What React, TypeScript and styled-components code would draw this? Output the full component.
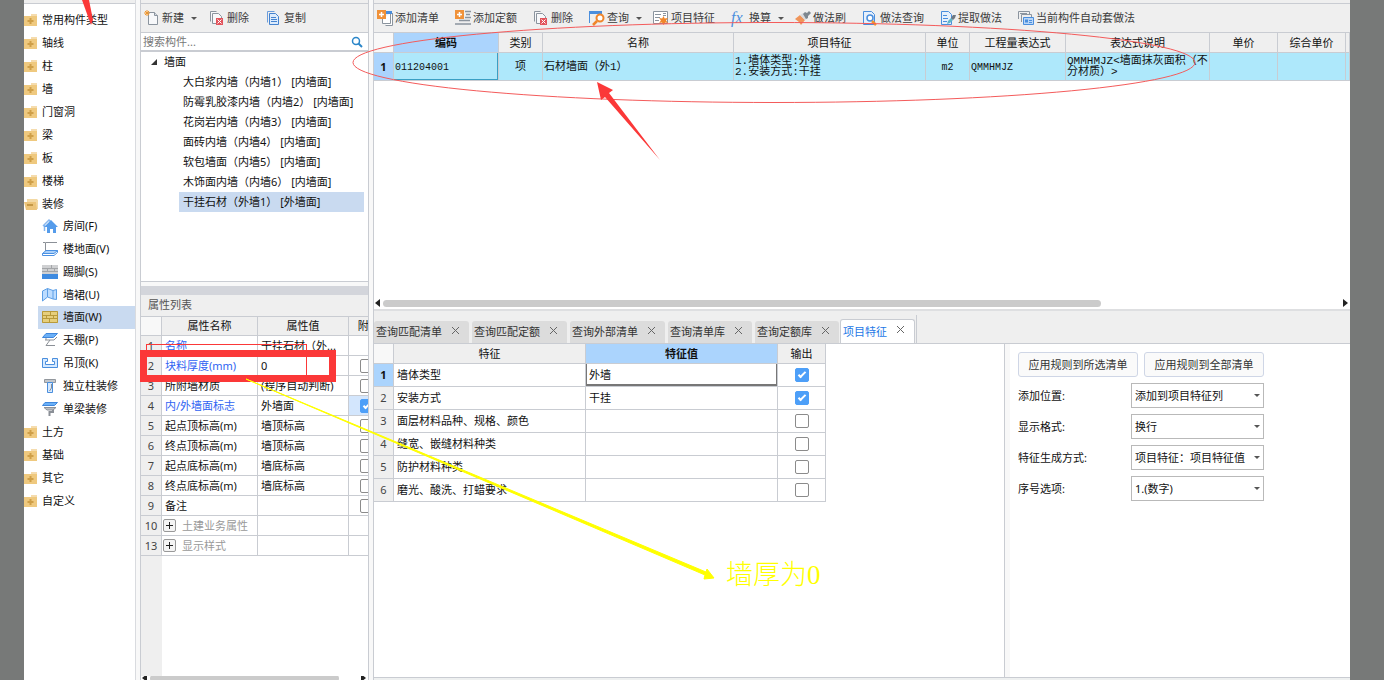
import React from 'react';
import styled, { createGlobalStyle, css } from 'styled-components';

const GlobalStyle = createGlobalStyle`
  *, *::before, *::after { box-sizing: border-box; }
  body { margin: 0; background: #777978; }
  body, button, input, select, table {
    font-family: "Noto Sans", "Noto Sans CJK SC", sans-serif;
    font-size: 11px;
    line-height: 16px;
    color: #111;
  }
  button { border: 0; padding: 0; background: none; cursor: pointer; }
`;

const line = '#c9ccd2';
const bar = '#efefef';
const pick = '#c9daf0';
const headBlue = '#abd4fd';

/* ---------- frame ---------- */

const Desk = styled.div`
  position: relative;
  min-height: 100vh;
  padding: 0 34px 0 24px;
  display: flex;
  background: #777978;
  overflow: hidden;
`;

const Shell = styled.div`
  flex: 1;
  min-width: 0;
  display: flex;
  background: #f8f8f8;
`;

const Strip = styled.div`
  flex: none;
  height: 4px;
  background: ${bar};
  border-bottom: 1px solid ${line};
`;

/* ---------- category list ---------- */

const Side = styled.nav`
  flex: none;
  width: 112px;
  background: #fff;
  border-right: 1px solid #d9dbdf;
`;

const CatList = styled.ul`
  margin: 0;
  padding: 4px 0 0;
  list-style: none;
`;

const SubList = styled.ul`
  margin: 0;
  padding: 0 0 0 14px;
  list-style: none;
  display: grid;
  height: 205px;
`;

const CatButton = styled.button`
  display: flex;
  align-items: center;
  gap: 4px;
  width: 100%;
  height: 23px;
  text-align: left;
  white-space: nowrap;
`;

const SubButton = styled.button<{ $active?: boolean }>`
  display: flex;
  align-items: center;
  gap: 5px;
  width: 100%;
  height: 100%;
  padding-left: 4px;
  text-align: left;
  white-space: nowrap;
  background: ${(p) => (p.$active ? pick : 'transparent')};
`;

/* ---------- component column ---------- */

const Mid = styled.section`
  flex: none;
  width: 229px;
  margin-left: 4px;
  display: flex;
  flex-direction: column;
  border: solid ${line};
  border-width: 0 1px;
`;

const Tools = styled.div<{ $gap: number }>`
  flex: none;
  height: 29px;
  padding: 0 3px;
  display: flex;
  align-items: center;
  gap: ${(p) => p.$gap}px;
  background: ${bar};
  border-bottom: 1px solid ${line};
`;

const ToolButton = styled.button<{ $menu?: boolean }>`
  display: flex;
  align-items: center;
  gap: 2px;
  white-space: nowrap;
  color: #3c3c3c;
  ${(p) =>
    p.$menu &&
    css`
      margin-right: -5px;
    `}
`;

const Caret = styled.span`
  margin-left: 5px;
  border: 3px solid transparent;
  border-top-color: #555;
  border-bottom-width: 0;
`;

const SearchBar = styled.label`
  flex: none;
  height: 19px;
  padding: 0 5px 0 2px;
  display: flex;
  align-items: center;
  background: #fff;
  border-bottom: 2px solid ${line};
`;

const SearchInput = styled.input`
  flex: 1;
  min-width: 0;
  padding: 0;
  border: 0;
  outline: 0;
  background: none;
  &::placeholder { color: #777; opacity: 1; }
`;

const TreePane = styled.div`
  flex: none;
  height: 230px;
  background: #fff;
  border-bottom: 1px solid ${line};
`;

const TreeRoot = styled.div`
  display: flex;
  align-items: center;
  gap: 6px;
  height: 20px;
  padding-left: 9px;
`;

const TreeItem = styled.button<{ $active?: boolean }>`
  display: block;
  width: 185px;
  height: 20px;
  margin-left: 38px;
  padding: 0 0 0 4px;
  text-align: left;
  white-space: pre;
  background: ${(p) => (p.$active ? pick : 'transparent')};
`;

const Splitter = styled.div`
  flex: none;
  height: 9px;
  margin-top: 4px;
  background: #d3d5db;
`;

const PaneTitle = styled.h2`
  flex: none;
  margin: 0;
  height: 22px;
  padding-left: 7px;
  line-height: 20px;
  font-size: 11px;
  font-weight: 400;
  color: #555;
  background: ${bar};
  border-bottom: 1px solid ${line};
`;

const PropPane = styled.div`
  flex: 1;
  overflow: hidden;
  background: linear-gradient(to right, ${bar} 21px, #fff 21px);
`;

/* ---------- tables ---------- */

const Col = styled.col<{ $w?: number }>`
  width: ${(p) => (p.$w ? `${p.$w}px` : 'auto')};
`;

const Grid = styled.table<{ $w: string; $head: number; $row: number }>`
  width: ${(p) => p.$w};
  border-collapse: separate;
  border-spacing: 0;
  table-layout: fixed;
  background: #fff;
  th, td {
    padding: 0 3px;
    white-space: nowrap;
    border: solid ${line};
    border-width: 0 1px 1px 0;
  }
  thead th { height: ${(p) => p.$head}px; }
  tbody th, tbody td { height: ${(p) => p.$row}px; }
`;

const Head = styled.th<{ $on?: boolean; $blank?: boolean; $left?: boolean }>`
  font-weight: ${(p) => (p.$on ? 700 : 400)};
  text-align: ${(p) => (p.$left ? 'left' : 'center')};
  background: ${(p) => (p.$on ? headBlue : p.$blank ? '#f8f8f8' : bar)};
`;

const Num = styled.th<{ $on?: boolean }>`
  && { padding: 0; }
  text-align: center;
  font-weight: ${(p) => (p.$on ? 700 : 400)};
  color: ${(p) => (p.$on ? '#111' : '#444')};
  background: ${(p) => (p.$on ? headBlue : bar)};
`;

const Cell = styled.td<{ $tone?: 'link' | 'mute'; $focus?: boolean; $mid?: boolean; $tint?: boolean }>`
  text-align: ${(p) => (p.$mid ? 'center' : 'left')};
  color: ${(p) => (p.$tone === 'link' ? '#2f63f2' : p.$tone === 'mute' ? '#999' : '#111')};
  background: ${(p) => (p.$tint ? '#d3e6fd' : 'transparent')};
  ${(p) => p.$focus && css`box-shadow: inset 1px 0 #777, inset -1px -2px #777;`}
`;

const BillCell = styled.td<{ $mid?: boolean; $focus?: boolean; $code?: boolean }>`
  font-family: "Liberation Mono", "Noto Sans CJK SC", monospace;
  font-size: ${(p) => (p.$code ? 10 : 11)}px;
  line-height: 11px;
  text-align: ${(p) => (p.$mid ? 'center' : 'left')};
  background: #aee8fb;
  && { padding: 1px 1px 0; white-space: pre-line; }
  ${(p) => p.$focus && css`box-shadow: inset -1px -1px #3a9fc4;`}
`;

const Check = styled.input<{ $inset?: boolean }>`
  appearance: none;
  display: block;
  width: 14px;
  height: 14px;
  margin: ${(p) => (p.$inset ? '0 0 0 8px' : '0 auto')};
  border: 1px solid #8b8b8b;
  border-radius: 2px;
  background: #fff;
  &:checked {
    border-color: #4d9ff8;
    background: #4d9ff8;
  }
  &:checked::after {
    content: "";
    display: block;
    width: 8px;
    height: 4px;
    margin: 3px 0 0 2px;
    border: solid #fff;
    border-width: 0 0 2px 2px;
    transform: rotate(-45deg);
  }
`;

const Expand = styled.span`
  display: flex;
  align-items: center;
  gap: 6px;
  margin-left: -2px;
`;

const PlusButton = styled.button`
  display: grid;
  place-items: center;
  width: 13px;
  height: 13px;
  background: #f4f4f4;
  border: 1px solid #999;
  border-radius: 2px;
`;

const Scroll = styled.div<{ $h: number; $pad: number }>`
  flex: none;
  height: ${(p) => p.$h}px;
  display: flex;
  align-items: center;
  gap: ${(p) => p.$pad}px;
  padding: 0 2px 0 1px;
  background: #fff;
  overflow: hidden;
`;

const Track = styled.div`
  flex: 1;
`;

const Thumb = styled.div<{ $w: string }>`
  width: ${(p) => p.$w};
  height: 7px;
  border-radius: 4px;
  background: #cbcbcb;
`;

const Nub = styled.span<{ $right?: boolean }>`
  border: 4px solid transparent;
  ${(p) =>
    p.$right
      ? css`border-right-width: 0; border-left: 5px solid #222;`
      : css`border-left-width: 0; border-right: 5px solid #222;`}
`;

/* ---------- work area ---------- */

const Main = styled.main`
  flex: 1;
  min-width: 0;
  margin-left: 4px;
  display: flex;
  flex-direction: column;
  border-left: 1px solid ${line};
`;

const BillPane = styled.div`
  flex: none;
  height: 264px;
  background: #fff;
`;

const TabBar = styled.div`
  flex: none;
  height: 35px;
  display: flex;
  align-items: flex-end;
  gap: 3px;
  background: ${bar};
  border-top: 2px solid #dedfe1;
  border-bottom: 1px solid ${line};
`;

const Tab = styled.div<{ $active?: boolean }>`
  display: flex;
  align-items: center;
  gap: 9px;
  height: 22px;
  padding: 0 8px 0 2px;
  white-space: nowrap;
  background: #dcdcdc;
  border-radius: 3px 3px 0 0;
  ${(p) =>
    p.$active &&
    css`
      height: 24px;
      margin-left: -2px;
      background: #fff;
      border: 1px solid ${line};
      border-bottom: 0;
    `}
`;

const TabButton = styled.button<{ $active?: boolean }>`
  color: ${(p) => (p.$active ? '#1e78e6' : '#333')};
`;

const CloseButton = styled.button`
  display: flex;
  padding-bottom: 4px;
`;

const TabEnd = styled.span`
  width: 1px;
  height: 28px;
  margin-left: -2px;
  background: ${line};
`;

const Lower = styled.div`
  flex: 1;
  min-height: 0;
  display: flex;
  border-bottom: 1px solid ${line};
`;

const FeaturePane = styled.div`
  flex: 1;
  background: #fff;
  border-right: 1px solid ${line};
`;

const RulePane = styled.form`
  flex: 0 1 340px;
  margin-left: 5px;
  padding: 8px;
  display: flex;
  flex-direction: column;
  gap: 6px;
  background: #fff;
`;

const RuleRow = styled.div`
  display: flex;
  align-items: center;
  gap: 6px;
`;

const RuleButton = styled.button`
  width: 120px;
  height: 25px;
  color: #333;
  background: #fafafa;
  border: 1px solid #cfd6e6;
  border-radius: 3px;
`;

const RuleLabel = styled.label`
  width: 107px;
`;

const SelectBox = styled.div`
  position: relative;
  width: 133px;
  height: 25px;
`;

const Select = styled.select`
  appearance: none;
  width: 100%;
  height: 100%;
  padding: 0 12px 0 3px;
  background: #fff;
  border: 1px solid #b9b9b9;
  border-radius: 0;
`;

const SelectCaret = styled(Caret)`
  position: absolute;
  right: 4px;
  top: 11px;
  pointer-events: none;
`;

const Foot = styled.div`
  flex: none;
  height: 2px;
  background: #eef0f0;
`;

/* ---------- markup drawn over the window ---------- */

const Markup = styled.svg`
  position: absolute;
  left: 0;
  top: 0;
  width: 100%;
  height: 100%;
  pointer-events: none;
`;

const Note = styled.p`
  position: absolute;
  left: 726px;
  top: 558px;
  margin: 0;
  font-family: "Liberation Serif", "Noto Sans CJK SC", serif;
  font-size: 27px;
  font-weight: 300;
  line-height: 34px;
  color: #ffff00;
  pointer-events: none;
`;

/* ---------- icons ---------- */

const Folder = ({ open }: { open?: boolean }) => (
  <svg width="14" height="14" viewBox="0 0 14 14">
    {open ? (
      <>
        <path d="M3 2h10l1 1v9H3z" fill="#f3d9a4" />
        <path d="M0 5h12l1 8H2z" fill="#ecc479" />
        <path d="M3 8h6" stroke="#b98a35" strokeWidth="1.500" />
      </>
    ) : (
      <>
        <path d="M7 1h6v2H7z" fill="#f5dcae" />
        <path d="M0 3h13v10H0z" fill="#efc97f" />
        <path d="M6.500 5v6M3.500 8h6" stroke="#cf9f48" strokeWidth="2" />
      </>
    )}
  </svg>
);

const subArt: Record<string, React.ReactNode> = {
  room: (
    <>
      <path d="M1 8l6-6 2 2M2.500 7v6" stroke="#86b6ee" fill="none" strokeWidth="1.500" />
      <path d="M2 9l7-7 7 7h-2v6h-3v-4H8v4H5V9z" fill="#559ceb" />
    </>
  ),
  floor: (
    <>
      <path d="M3.500 10V1.500H15M1 1.500h2" stroke="#8b9097" fill="none" />
      <path d="M4 9.500h11.500l-3.500 3H0.500z" fill="#a9d0fa" stroke="#4a90e2" />
      <path d="M0.500 12.500v2H12l3.500-3v-2" stroke="#4a90e2" fill="none" />
    </>
  ),
  skirt: (
    <>
      <path d="M0 1h16v9H0z" fill="#cfd0d2" />
      <path d="M0 4.500h16M0 7.500h16M9.500 1v3M5.500 4v4M12.500 4v4" stroke="#a3a5a8" />
      <path d="M0 10h16v5H0z" fill="#3f8be0" />
    </>
  ),
  dado: (
    <path d="M0.500 4l5-2.500L11 3.500l3.500-1v10L11 12l-5.500-2-5 4zM5.500 1.500V10M11 3.500V12" fill="#bcdcff" stroke="#5d9fe6" />
  ),
  wall: (
    <>
      <path d="M0 2h16v12H0z" fill="#e6cf7c" />
      <path d="M0.500 2.500h15v11h-15zM0 6.500h16M0 9.500h16M8.500 2v4M4.500 6v4M11.500 6v4M7.500 10v4" stroke="#b89a3a" fill="none" />
    </>
  ),
  canopy: (
    <>
      <path d="M4 1.500h11.500l-4 4H0.500z" fill="#6bb0f7" stroke="#3f87dc" />
      <path d="M3 8h9l3-3M8 8l-4 5.500h9M4 6v2" stroke="#8b9097" fill="none" />
    </>
  ),
  ceiling: (
    <path d="M0.500 3.500h5v3h-2v3h9v-3h-2v-3h5v9h-15z" fill="#d5e9ff" stroke="#4a8edd" />
  ),
  column: (
    <>
      <path d="M2.500 1.500h11v3h-11z" fill="#c3c7cc" stroke="#92979d" />
      <path d="M5.500 4.500h5v10h-5z" fill="#d5e9ff" stroke="#4a8edd" />
      <path d="M9.500 6v4l-2 3" stroke="#8b9097" fill="none" />
    </>
  ),
  beam: (
    <>
      <path d="M3 1.500h12.500l-3 3H0.500z" fill="#6bb0f7" stroke="#3f87dc" />
      <path d="M2 6.500h12l-3 2.500H5z" fill="#b9bdc3" stroke="#8b9097" />
      <path d="M11 9v2H7.500v4" stroke="#8b9097" strokeWidth="2" fill="none" />
    </>
  ),
};

const SubIcon = ({ kind }: { kind: string }) => (
  <svg width="16" height="16" viewBox="0 0 16 16">{subArt[kind]}</svg>
);

const toolArt: Record<string, React.ReactNode> = {
  create: (
    <>
      <path d="M4.500 2.500h6l3 3v9h-9z" fill="#f7f8fa" stroke="#8b949e" />
      <path d="M10.500 2.500v3h3" fill="#d5dbe2" stroke="#8b949e" />
      <path d="M3 0v6M0 3h6M1 1l4 4M5 1L1 5" stroke="#f0962c" />
    </>
  ),
  remove: (
    <>
      <path d="M1.500 11.500v-10h6M3.500 3.500h6l3 3v7h-9z" fill="#f7f8fa" stroke="#8b949e" />
      <path d="M7 8h7v7H7z" fill="#e2545c" />
      <path d="M8.500 9.500l4 4M12.500 9.500l-4 4" stroke="#fff" />
    </>
  ),
  copy: (
    <>
      <path d="M1.500 12.500v-11h7" fill="none" stroke="#6b9ddc" />
      <path d="M3.500 3.500h6l3 3v8h-9z" fill="#dcebfc" stroke="#4583cf" />
      <path d="M5 7.500h5M5 9.500h6M5 11.500h6" stroke="#4583cf" />
    </>
  ),
  addBill: (
    <>
      <path d="M5.500 9v4.500h8V3M8.500 15.500h7V3" stroke="#8b949e" fill="#fff" />
      <path d="M8 1h7v3H8z" fill="#4a8edd" />
      <path d="M0 0h9v9H0z" fill="#f0923a" />
      <path d="M4.500 2v5M2 4.500h5" stroke="#fff" strokeWidth="1.500" />
    </>
  ),
  addQuota: (
    <>
      <path d="M10 1.500h6M11 4.500h4M10 7.500h6M4 10.500h11M0 14h16" stroke="#8b949e" strokeWidth="1.500" />
      <path d="M0 0h9v9H0z" fill="#f0923a" />
      <path d="M4.500 2v5M2 4.500h5" stroke="#fff" strokeWidth="1.500" />
    </>
  ),
  query: (
    <>
      <path d="M0.500 13V1.500h12V5" stroke="#4a8edd" fill="none" />
      <path d="M0 1h13v3H0z" fill="#4a8edd" />
      <circle cx="11" cy="8" r="3.500" fill="#fff" stroke="#f0862a" strokeWidth="2" />
      <path d="M8 11l-4 4" stroke="#f0862a" strokeWidth="2.500" />
    </>
  ),
  feature: (
    <>
      <path d="M0.500 1.500h14v12h-14z" fill="#fff" stroke="#8b949e" />
      <path d="M2 4.500h6M2 7.500h5M2 10.500h4M10 3.500h3M10 5.500h3" stroke="#8b949e" />
      <path d="M10.500 6l1.200 2.600 3.300-.6-2 2.500 2 2.500-2.800-.4-1.700 2.400-1.500-2.400-2.800.4 1.700-2.500-1.700-2.500 3 .6z" fill="#f0862a" />
    </>
  ),
  brush: (
    <>
      <path d="M0 9l5-4 5 5-4 5-2-3z" fill="#f0955a" />
      <path d="M5 5l3-2 5 5-3 2z" fill="#d7dade" />
      <path d="M8 4l2-2 2 1 2-2 2 2-3 3 0 2-2 1z" fill="#7e8890" />
    </>
  ),
  find: (
    <>
      <path d="M1.500 1.500h8l3 3v10h-11z" fill="#e6f0fc" stroke="#4a8edd" />
      <circle cx="8" cy="8" r="3" fill="#fff" stroke="#4a8edd" strokeWidth="1.500" />
      <path d="M10 11l4 4" stroke="#f0962c" strokeWidth="2.500" />
    </>
  ),
  extract: (
    <>
      <path d="M1.500 1.500h7l3 3v10h-10z" fill="#e6f0fc" stroke="#4a8edd" />
      <path d="M3 5.500h4M3 8.500h5M3 11.500h4" stroke="#4a8edd" />
      <path d="M7 14l1-3 3-3 2 2-3 3z" fill="#5fb6c8" />
      <path d="M11 8l2-3h3l-1 3-2 2z" fill="#6f7880" />
    </>
  ),
  auto: (
    <>
      <path d="M0.500 9V1.500h11V4" fill="none" stroke="#8b949e" />
      <path d="M3.500 12V4.500h10V7M2 3.500h7" fill="none" stroke="#8b949e" />
      <path d="M5.500 7.500h10v7h-10z" fill="#b9d6f7" stroke="#4a8edd" />
      <path d="M7 9.500h3v3H7z" fill="#4a8edd" />
      <path d="M11 10.500h3M11 12.500h3" stroke="#4a8edd" />
    </>
  ),
};

const FxMark = styled.span`
  width: 16px;
  font-family: "Liberation Serif", serif;
  font-size: 16px;
  font-style: italic;
  text-align: left;
  color: #4a8edd;
`;

const ToolIcon = ({ kind }: { kind: string }) =>
  kind === 'fx' ? (
    <FxMark aria-hidden>fx</FxMark>
  ) : (
    <svg width="16" height="16" viewBox="0 0 16 16">{toolArt[kind]}</svg>
  );

/* ---------- data ---------- */

const catsBefore = ['常用构件类型', '轴线', '柱', '墙', '门窗洞', '梁', '板', '楼梯'];
const catsAfter = ['土方', '基础', '其它', '自定义'];
const subs: [string, string][] = [
  ['room', '房间(F)'],
  ['floor', '楼地面(V)'],
  ['skirt', '踢脚(S)'],
  ['dado', '墙裙(U)'],
  ['wall', '墙面(W)'],
  ['canopy', '天棚(P)'],
  ['ceiling', '吊顶(K)'],
  ['column', '独立柱装修'],
  ['beam', '单梁装修'],
];

const treeItems = [
  '大白浆内墙（内墙1） [内墙面]',
  '防霉乳胶漆内墙（内墙2） [内墙面]',
  '花岗岩内墙（内墙3） [内墙面]',
  '面砖内墙（内墙4） [内墙面]',
  '软包墙面（内墙5） [内墙面]',
  '木饰面内墙（内墙6） [内墙面]',
  '干挂石材（外墙1） [外墙面]',
];

type Prop = { n: number; name: string; value?: string; link?: boolean; box?: 'off' | 'on'; group?: boolean };
const props: Prop[] = [
  { n: 1, name: '名称', value: '干挂石材（外...', link: true },
  { n: 2, name: '块料厚度(mm)', value: '0', link: true, box: 'off' },
  { n: 3, name: '所附墙材质', value: '(程序自动判断)', box: 'off' },
  { n: 4, name: '内/外墙面标志', value: '外墙面', link: true, box: 'on' },
  { n: 5, name: '起点顶标高(m)', value: '墙顶标高', box: 'off' },
  { n: 6, name: '终点顶标高(m)', value: '墙顶标高', box: 'off' },
  { n: 7, name: '起点底标高(m)', value: '墙底标高', box: 'off' },
  { n: 8, name: '终点底标高(m)', value: '墙底标高', box: 'off' },
  { n: 9, name: '备注', box: 'off' },
  { n: 10, name: '土建业务属性', group: true },
  { n: 13, name: '显示样式', group: true },
];

const tools: { kind: string; text: string; menu?: boolean }[] = [
  { kind: 'addBill', text: '添加清单' },
  { kind: 'addQuota', text: '添加定额' },
  { kind: 'remove', text: '删除' },
  { kind: 'query', text: '查询', menu: true },
  { kind: 'feature', text: '项目特征' },
  { kind: 'fx', text: '换算', menu: true },
  { kind: 'brush', text: '做法刷' },
  { kind: 'find', text: '做法查询' },
  { kind: 'extract', text: '提取做法' },
  { kind: 'auto', text: '当前构件自动套做法' },
];

const billCols = [105, 44, 191, 192, 44, 96, 144, 68, 68];
const billHeads = ['编码', '类别', '名称', '项目特征', '单位', '工程量表达式', '表达式说明', '单价', '综合单价'];
const tabs = ['查询匹配清单', '查询匹配定额', '查询外部清单', '查询清单库', '查询定额库', '项目特征'];

const features: { name: string; value: string; out: boolean }[] = [
  { name: '墙体类型', value: '外墙', out: true },
  { name: '安装方式', value: '干挂', out: true },
  { name: '面层材料品种、规格、颜色', value: '', out: false },
  { name: '缝宽、嵌缝材料种类', value: '', out: false },
  { name: '防护材料种类', value: '', out: false },
  { name: '磨光、酸洗、打蜡要求', value: '', out: false },
];

const rules: [string, string, string][] = [
  ['place', '添加位置:', '添加到项目特征列'],
  ['format', '显示格式:', '换行'],
  ['build', '特征生成方式:', '项目特征：项目特征值'],
  ['order', '序号选项:', '1.(数字)'],
];

/* ---------- page ---------- */

const Sidebar = () => (
  <Side>
    <Strip />
    <CatList>
      {catsBefore.map((c) => (
        <li key={c}>
          <CatButton><Folder />{c}</CatButton>
        </li>
      ))}
      <li>
        <CatButton aria-expanded><Folder open />装修</CatButton>
        <SubList>
          {subs.map(([kind, text]) => (
            <li key={kind}>
              <SubButton $active={kind === 'wall'}><SubIcon kind={kind} />{text}</SubButton>
            </li>
          ))}
        </SubList>
      </li>
      {catsAfter.map((c) => (
        <li key={c}>
          <CatButton><Folder />{c}</CatButton>
        </li>
      ))}
    </CatList>
  </Side>
);

const Components = () => (
  <Mid>
    <Strip />
    <Tools $gap={17}>
      <ToolButton $menu><ToolIcon kind="create" />新建<Caret /></ToolButton>
      <ToolButton><ToolIcon kind="remove" />删除</ToolButton>
      <ToolButton><ToolIcon kind="copy" />复制</ToolButton>
    </Tools>
    <SearchBar>
      <SearchInput type="text" placeholder="搜索构件..." aria-label="搜索构件" />
      <svg width="12" height="12" viewBox="0 0 12 12">
        <circle cx="5" cy="5" r="3.500" fill="none" stroke="#2b86c9" strokeWidth="1.500" />
        <path d="M7.500 7.500L11 11" stroke="#2b86c9" strokeWidth="2" />
      </svg>
    </SearchBar>
    <TreePane>
      <TreeRoot>
        <svg width="8" height="8" viewBox="0 0 8 8"><path d="M7 1v6H1z" fill="#333" /></svg>
        墙面
      </TreeRoot>
      {treeItems.map((t, i) => (
        <TreeItem key={t} $active={i === 6}>{t}</TreeItem>
      ))}
    </TreePane>
    <Splitter />
    <PaneTitle>属性列表</PaneTitle>
    <PropPane>
      <Grid $w="246px" $head={19} $row={20}>
        <colgroup><Col $w={21} /><Col $w={96} /><Col $w={91} /><Col $w={38} /></colgroup>
        <thead>
          <tr><Head $blank /><Head>属性名称</Head><Head>属性值</Head><Head $left>&nbsp;&nbsp;附</Head></tr>
        </thead>
        <tbody>
          {props.map((p) => (
            <tr key={p.n}>
              <Num>{p.n}</Num>
              <Cell $tone={p.link ? 'link' : p.group ? 'mute' : undefined}>
                {p.group ? (
                  <Expand>
                    <PlusButton aria-label={p.name}>
                      <svg width="7" height="7" viewBox="0 0 7 7"><path d="M3.500 0v7M0 3.500h7" stroke="#222" /></svg>
                    </PlusButton>
                    {p.name}
                  </Expand>
                ) : (
                  p.name
                )}
              </Cell>
              <Cell>{p.value}</Cell>
              <Cell $tint={p.box === 'on'}>
                {p.box && <Check $inset type="checkbox" aria-label={p.name} defaultChecked={p.box === 'on'} />}
              </Cell>
            </tr>
          ))}
        </tbody>
      </Grid>
    </PropPane>
    <Scroll $h={4} $pad={3}>
      <Nub /><Track><Thumb $w="91%" /></Track><Nub $right />
    </Scroll>
  </Mid>
);

const Work = () => (
  <Main>
    <Strip />
    <Tools $gap={16}>
      {tools.map((t) => (
        <ToolButton key={t.text} $menu={t.menu}>
          <ToolIcon kind={t.kind} />{t.text}{t.menu && <Caret />}
        </ToolButton>
      ))}
    </Tools>
    <BillPane>
      <Grid $w="100%" $head={20} $row={28}>
        <colgroup>
          <Col $w={20} />
          {billCols.map((w, i) => <Col key={i} $w={w} />)}
          <Col />
        </colgroup>
        <thead>
          <tr>
            <Head $blank />
            {billHeads.map((h, i) => <Head key={h} $on={i === 0}>{h}</Head>)}
            <Head />
          </tr>
        </thead>
        <tbody>
          <tr>
            <Num $on>1</Num>
            <BillCell $focus $code>011204001</BillCell>
            <BillCell $mid>项</BillCell>
            <BillCell>石材墙面（外1）</BillCell>
            <BillCell>{'1.墙体类型:外墙\n2.安装方式:干挂'}</BillCell>
            <BillCell $mid $code>m2</BillCell>
            <BillCell $code>QMMHMJZ</BillCell>
            <BillCell>{'QMMHMJZ<墙面抹灰面积（不\n分材质）>'}</BillCell>
            <BillCell /><BillCell /><BillCell />
          </tr>
        </tbody>
      </Grid>
    </BillPane>
    <Scroll $h={12} $pad={3}>
      <Nub /><Track><Thumb $w="75%" /></Track><Nub $right />
    </Scroll>
    <TabBar role="tablist">
      {tabs.map((t, i) => (
        <Tab key={t} $active={i === 5}>
          <TabButton role="tab" aria-selected={i === 5} $active={i === 5}>{t}</TabButton>
          <CloseButton aria-label={`关闭${t}`}>
            <svg width="10" height="9" viewBox="0 0 10 9"><path d="M1 1l7 7M8 1L1 8" stroke="#666" /></svg>
          </CloseButton>
        </Tab>
      ))}
      <TabEnd />
    </TabBar>
    <Lower>
      <FeaturePane>
        <Grid $w="452px" $head={20} $row={23}>
          <colgroup><Col $w={20} /><Col $w={192} /><Col $w={192} /><Col $w={48} /></colgroup>
          <thead>
            <tr><Head $blank /><Head>特征</Head><Head $on>特征值</Head><Head>输出</Head></tr>
          </thead>
          <tbody>
            {features.map((f, i) => (
              <tr key={f.name}>
                <Num $on={i === 0}>{i + 1}</Num>
                <Cell>{f.name}</Cell>
                <Cell $focus={i === 0}>{f.value}</Cell>
                <Cell $mid><Check type="checkbox" aria-label={f.name} defaultChecked={f.out} /></Cell>
              </tr>
            ))}
          </tbody>
        </Grid>
      </FeaturePane>
      <RulePane>
        <RuleRow>
          <RuleButton type="button">应用规则到所选清单</RuleButton>
          <RuleButton type="button">应用规则到全部清单</RuleButton>
        </RuleRow>
        {rules.map(([id, label, value]) => (
          <RuleRow key={id}>
            <RuleLabel htmlFor={id}>{label}</RuleLabel>
            <SelectBox>
              <Select id={id}><option>{value}</option></Select>
              <SelectCaret />
            </SelectBox>
          </RuleRow>
        ))}
      </RulePane>
    </Lower>
    <Foot />
  </Main>
);

export default function App() {
  return (
    <>
      <GlobalStyle />
      <Desk>
        <Shell>
          <Sidebar />
          <Components />
          <Work />
        </Shell>
        <Markup aria-hidden>
          <path d="M82 0h7l4 20-2 5z" fill="#fb3838" />
          <ellipse cx="774" cy="62.500" rx="421" ry="40" fill="none" stroke="#f45b5b" />
          <path d="M597 82l16 8-4 3 51 67-55-63-4 3z" fill="#fb3838" />
          <rect x="146.500" y="344.500" width="160" height="31" fill="none" stroke="#fb3838" />
          <rect x="143.500" y="353.500" width="189" height="25" fill="none" stroke="#fb3838" strokeWidth="7" />
          <path d="M246 379l460 193 1-3 7 9-10 1 1-4z" fill="#ffff00" stroke="#ffff00" />
        </Markup>
        <Note>墙厚为0</Note>
      </Desk>
    </>
  );
}
